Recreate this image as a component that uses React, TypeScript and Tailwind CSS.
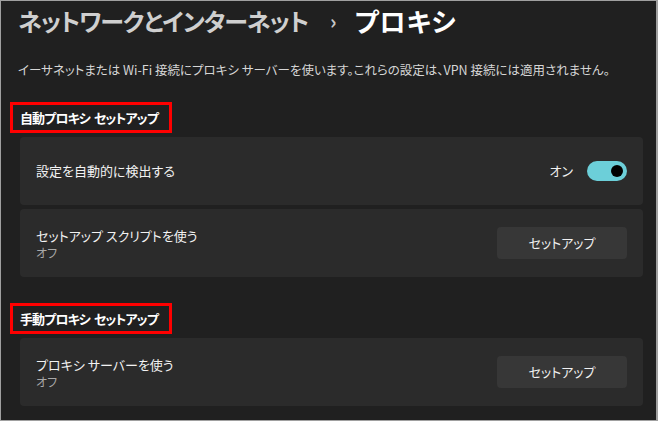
import React from "react";

const font = "[font-family:'Noto_Sans_CJK_JP','Noto_Sans',sans-serif] [font-feature-settings:'palt']";

function Toggle() {
  return (
    <div className="flex h-[20px] w-[40px] items-center justify-end rounded-full bg-[#6ccfd9] pr-[4px]">
      <div className="h-[12px] w-[12px] rounded-full bg-black" />
    </div>
  );
}

function SetupButton() {
  return (
    <button
      type="button"
      className="flex h-[32px] w-[130px] items-center justify-center rounded-[4px] bg-[#373737] text-[13px] text-[#f0f0f0]"
    >
      セットアップ
    </button>
  );
}

function SectionTitle({ lead, className }: { lead: string; className?: string }) {
  return (
    <div
      className={`ml-[9px] flex h-[31px] w-[162px] items-center gap-[4px] border-[3px] border-[#ff0000] pl-[7px] text-[13px] font-bold tracking-[-0.9px] text-white ${className ?? ""}`}
    >
      <span>{lead}</span>
      <span>セットアップ</span>
    </div>
  );
}

function Card({ title, sub, right }: { title: string; sub?: string; right: React.ReactNode }) {
  return (
    <div className="ml-[19px] mr-[13px] flex h-[68px] items-center justify-between rounded-[4px] bg-[#2b2b2b] pl-[16px] pr-[16px]">
      <div className="flex flex-col">
        <span className="text-[13px] leading-[18px] text-[#f2f2f2]">{title}</span>
        {sub && <span className="text-[12px] leading-[15px] text-[#a8a8a8]">{sub}</span>}
      </div>
      {right}
    </div>
  );
}

export default function App() {
  return (
    <div
      className={`${font} flex h-[421px] w-[658px] flex-col border-b border-l border-r-2 border-t border-[#a0a0a0] bg-[#202020]`}
    >
      <div className="ml-[17px] mt-[2px] flex h-[36px] items-center leading-none">
        <span className="text-[24px] font-semibold tracking-[-1px] text-[#cfcfcf]">ネットワークとインターネット</span>
        <span className="ml-[22px] mr-[18px] text-[20px] font-semibold text-[#c8c8c8]">›</span>
        <span className="text-[26px] font-bold tracking-[0.8px] text-white">プロキシ</span>
      </div>
      <p className="ml-[17px] mt-[22px] text-[12.5px] leading-[18px] text-[#d6d6d6]">
        イーサネットまたは Wi-Fi 接続にプロキシ サーバーを使います。これらの設定は、VPN 接続には適用されません。
      </p>
      <SectionTitle lead="自動プロキシ" className="mt-[23px]" />
      <div className="mt-[4px] flex flex-col gap-[4px]">
        <Card
          title="設定を自動的に検出する"
          right={
            <div className="flex items-center gap-[14px]">
              <span className="text-[13px] text-[#f0f0f0]">オン</span>
              <Toggle />
            </div>
          }
        />
        <Card title="セットアップ スクリプトを使う" sub="オフ" right={<SetupButton />} />
      </div>
      <SectionTitle lead="手動プロキシ" className="mt-[26px]" />
      <div className="mt-[4px] flex flex-col">
        <Card title="プロキシ サーバーを使う" sub="オフ" right={<SetupButton />} />
      </div>
    </div>
  );
}
